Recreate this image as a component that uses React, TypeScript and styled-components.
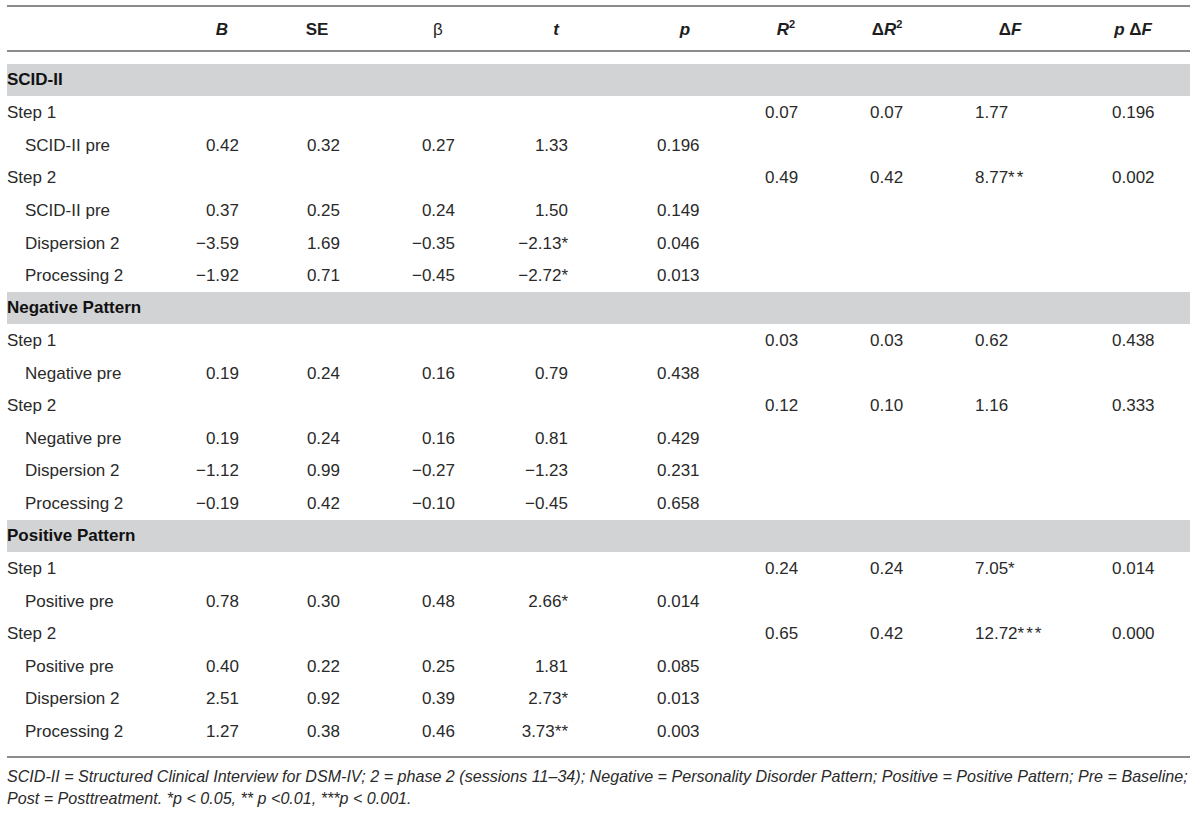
import React from "react";
import styled, { createGlobalStyle } from "styled-components";

const Global = createGlobalStyle`
  html, body { margin: 0; padding: 0; background: #ffffff; }
  body { font-family: "Liberation Sans", Arial, sans-serif; color: #2a2a2a; }
`;

const TRACKS = "173px 80px 110px 110px 140px 120px 110px 110px 130px 100px";

type Align = "left" | "right";
type Col = { align: Align; pad: number; hpl: number; hpr: number };

const COLS: Col[] = [
  { align: "right", pad: 21, hpl: 4, hpr: 0 },   // B
  { align: "right", pad: 30, hpl: 4, hpr: 0 },   // SE
  { align: "right", pad: 25, hpl: 26, hpr: 0 },  // beta
  { align: "right", pad: 52, hpl: 12, hpr: 0 },  // t
  { align: "left", pad: 37, hpl: 10, hpr: 0 },   // p
  { align: "left", pad: 25, hpl: 0, hpr: 18 },   // R2
  { align: "left", pad: 20, hpl: 0, hpr: 36 },   // dR2
  { align: "left", pad: 15, hpl: 0, hpr: 30 },   // dF
  { align: "left", pad: 22, hpl: 0, hpr: 14 },   // p dF
];

const Page = styled.div`
  width: 1183px;
  padding: 5px 10px 0 7px;
`;

const Table = styled.div`
  display: flex;
  flex-direction: column;
`;

const HeadRow = styled.div`
  display: grid;
  grid-template-columns: ${TRACKS};
  align-items: center;
  box-sizing: border-box;
  height: 47px;
  padding-top: 3px;
  border-top: 2px solid #8c8c8c;
  border-bottom: 2px solid #8c8c8c;
  margin-bottom: 12px;
`;

const HeadCell = styled.div<{ $pl: number; $pr: number }>`
  text-align: center;
  padding-left: ${(p) => p.$pl}px;
  padding-right: ${(p) => p.$pr}px;
  font-size: 17px;
  font-weight: 700;
  color: #1e1e1e;
  white-space: nowrap;
  sup { font-size: 11px; line-height: 0; vertical-align: 7px; }
`;

const Ital = styled.i`
  font-style: italic;
`;

const Plain = styled.span`
  font-weight: 400;
`;

const Row = styled.div`
  display: grid;
  grid-template-columns: ${TRACKS};
  align-items: center;
  height: 32.55px;
  padding-top: 1px;
  box-sizing: border-box;
`;

const SectionRow = styled.div`
  display: flex;
  align-items: center;
  height: 32px;
  margin: 0.3px 0 0.25px;
  background: #d1d3d4;
  font-size: 17px;
  font-weight: 700;
  color: #111;
`;

const Label = styled.div<{ $indent: boolean }>`
  font-size: 17px;
  padding-left: ${(p) => (p.$indent ? 18 : 0)}px;
  white-space: nowrap;
`;

const Cell = styled.div<{ $align: Align; $pad: number }>`
  font-size: 17px;
  text-align: ${(p) => p.$align};
  ${(p) => (p.$align === "right" ? `padding-right: ${p.$pad}px;` : `padding-left: ${p.$pad}px;`)}
  white-space: nowrap;
`;

const Stars = styled.span<{ $spaced: boolean }>`
  letter-spacing: ${(p) => (p.$spaced ? "2px" : "0")};
`;

const BottomRule = styled.div`
  margin-top: 8.5px;
  border-top: 2px solid #8c8c8c;
`;

const Note = styled.p`
  margin: 7px 0 0;
  font-size: 16.1px;
  line-height: 22px;
  font-style: italic;
  color: #2a2a2a;
  white-space: nowrap;
`;

type Data =
  | { kind: "section"; label: string }
  | { kind: "step"; label: string; v: [string, string, string, string] }
  | { kind: "item"; label: string; v: [string, string, string, string, string] };

const M = "\u2212";

const DATA: Data[] = [
  { kind: "section", label: "SCID-II" },
  { kind: "step", label: "Step 1", v: ["0.07", "0.07", "1.77", "0.196"] },
  { kind: "item", label: "SCID-II pre", v: ["0.42", "0.32", "0.27", "1.33", "0.196"] },
  { kind: "step", label: "Step 2", v: ["0.49", "0.42", "8.77**", "0.002"] },
  { kind: "item", label: "SCID-II pre", v: ["0.37", "0.25", "0.24", "1.50", "0.149"] },
  { kind: "item", label: "Dispersion 2", v: [M + "3.59", "1.69", M + "0.35", M + "2.13*", "0.046"] },
  { kind: "item", label: "Processing 2", v: [M + "1.92", "0.71", M + "0.45", M + "2.72*", "0.013"] },
  { kind: "section", label: "Negative Pattern" },
  { kind: "step", label: "Step 1", v: ["0.03", "0.03", "0.62", "0.438"] },
  { kind: "item", label: "Negative pre", v: ["0.19", "0.24", "0.16", "0.79", "0.438"] },
  { kind: "step", label: "Step 2", v: ["0.12", "0.10", "1.16", "0.333"] },
  { kind: "item", label: "Negative pre", v: ["0.19", "0.24", "0.16", "0.81", "0.429"] },
  { kind: "item", label: "Dispersion 2", v: [M + "1.12", "0.99", M + "0.27", M + "1.23", "0.231"] },
  { kind: "item", label: "Processing 2", v: [M + "0.19", "0.42", M + "0.10", M + "0.45", "0.658"] },
  { kind: "section", label: "Positive Pattern" },
  { kind: "step", label: "Step 1", v: ["0.24", "0.24", "7.05*", "0.014"] },
  { kind: "item", label: "Positive pre", v: ["0.78", "0.30", "0.48", "2.66*", "0.014"] },
  { kind: "step", label: "Step 2", v: ["0.65", "0.42", "12.72***", "0.000"] },
  { kind: "item", label: "Positive pre", v: ["0.40", "0.22", "0.25", "1.81", "0.085"] },
  { kind: "item", label: "Dispersion 2", v: ["2.51", "0.92", "0.39", "2.73*", "0.013"] },
  { kind: "item", label: "Processing 2", v: ["1.27", "0.38", "0.46", "3.73**", "0.003"] },
];

const HEADS: React.ReactNode[] = [
  <Ital>B</Ital>,
  <>SE</>,
  <Plain>β</Plain>,
  <Ital>t</Ital>,
  <Ital>p</Ital>,
  <>
    <Ital>R</Ital>
    <sup>2</sup>
  </>,
  <>
    Δ<Ital>R</Ital>
    <sup>2</sup>
  </>,
  <>
    Δ<Ital>F</Ital>
  </>,
  <>
    <Ital>p</Ital> Δ<Ital>F</Ital>
  </>,
];

function Value({ text, spaced }: { text: string; spaced: boolean }) {
  const m = text.match(/^([^*]*)(\**)$/);
  const num = m ? m[1] : text;
  const stars = m ? m[2] : "";
  return (
    <>
      {num}
      {stars && <Stars $spaced={spaced && stars.length > 1}>{stars}</Stars>}
    </>
  );
}

function DataRow({ d }: { d: Data }) {
  if (d.kind === "section") return <SectionRow>{d.label}</SectionRow>;
  const values: string[] =
    d.kind === "step" ? ["", "", "", "", "", ...d.v] : [...d.v, "", "", "", ""];
  return (
    <Row>
      <Label $indent={d.kind === "item"}>{d.label}</Label>
      {values.map((val, i) => (
        <Cell key={i} $align={COLS[i].align} $pad={COLS[i].pad}>
          <Value text={val} spaced={i === 7} />
        </Cell>
      ))}
    </Row>
  );
}

export default function App() {
  return (
    <Page>
      <Global />
      <Table>
        <HeadRow>
          <HeadCell $pl={0} $pr={0} />
          {HEADS.map((h, i) => (
            <HeadCell key={i} $pl={COLS[i].hpl} $pr={COLS[i].hpr}>
              {h}
            </HeadCell>
          ))}
        </HeadRow>
        {DATA.map((d, i) => (
          <DataRow key={i} d={d} />
        ))}
        <BottomRule />
      </Table>
      <Note>
        SCID-II = Structured Clinical Interview for DSM-IV; 2 = phase 2 (sessions 11{"\u2013"}34); Negative = Personality
        Disorder Pattern; Positive = Positive Pattern; Pre = Baseline;
        <br />
        Post = Posttreatment. *<Ital>p</Ital> {"<"} 0.05, ** <Ital>p</Ital> {"<"}0.01, ***<Ital>p</Ital> {"<"} 0.001.
      </Note>
    </Page>
  );
}
